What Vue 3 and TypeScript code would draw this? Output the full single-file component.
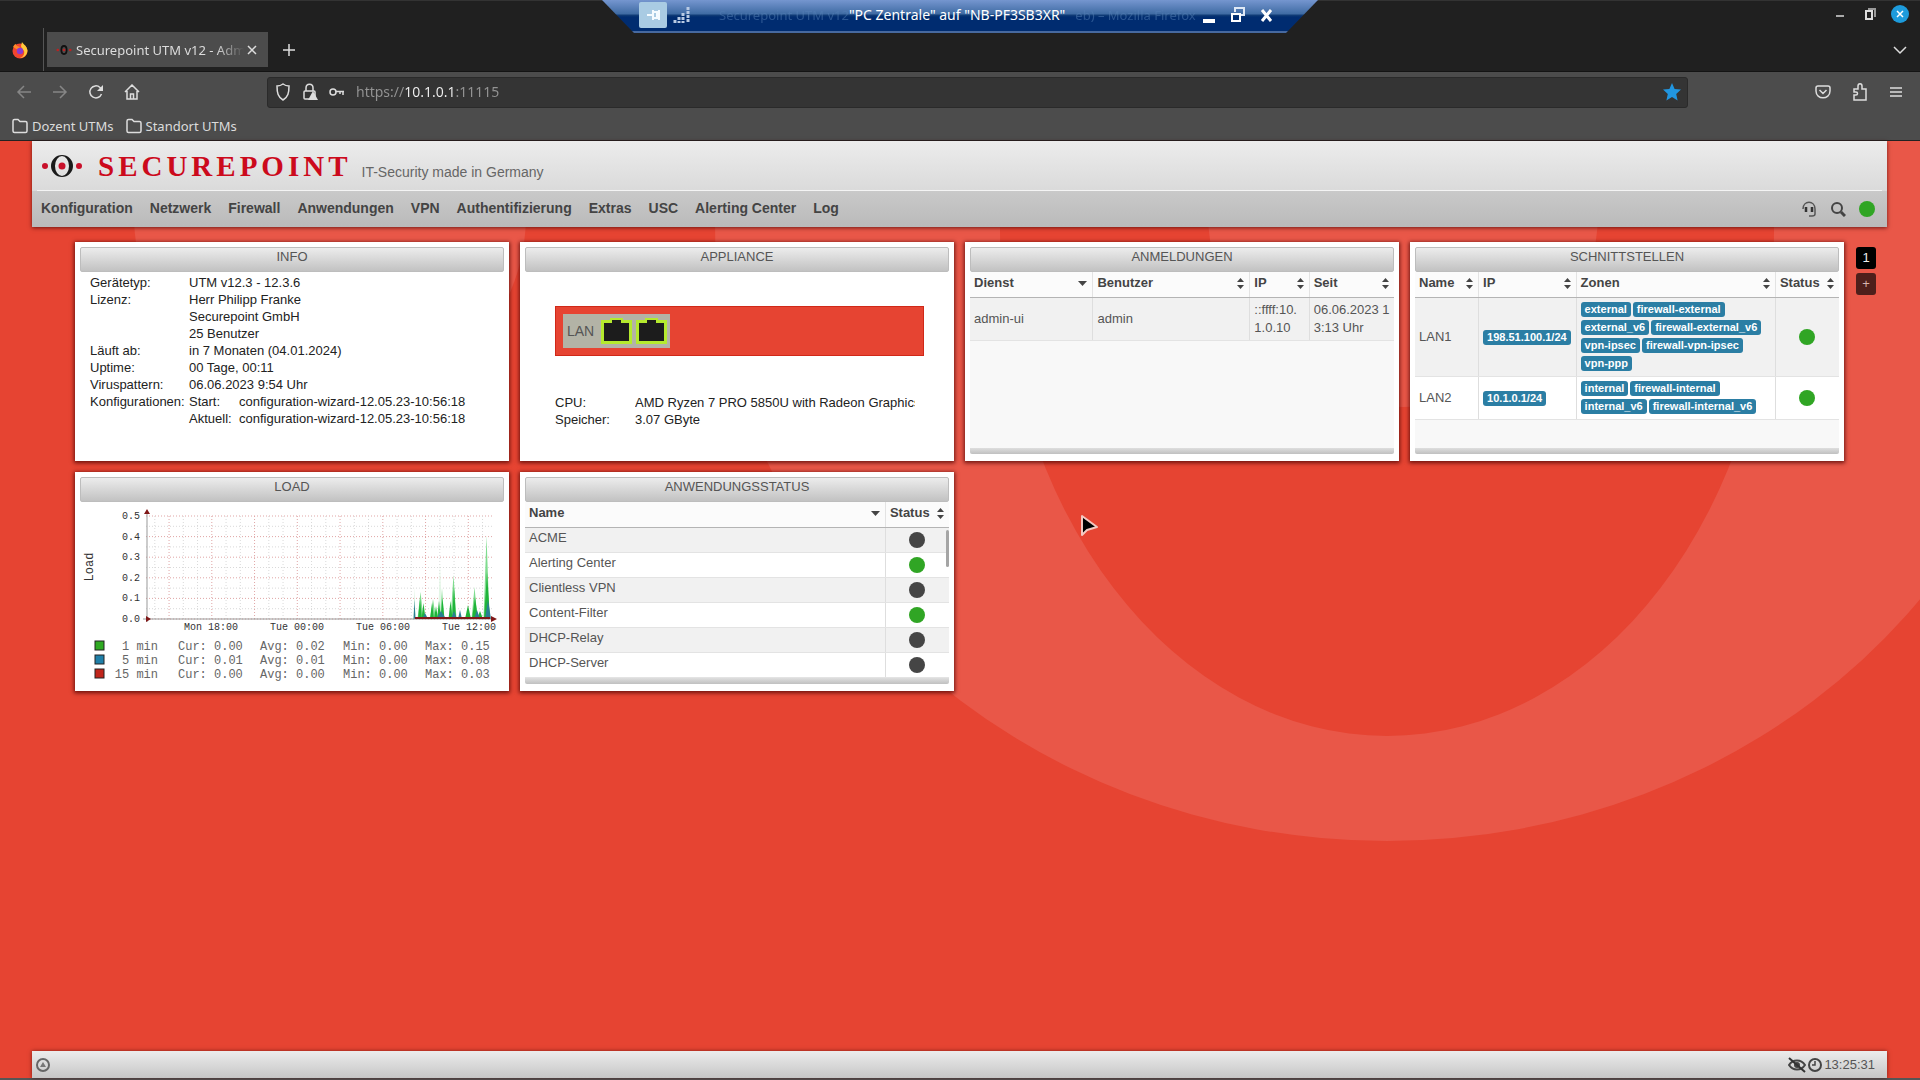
<script setup lang="ts">
import { ref } from 'vue'

interface Column { label: string; width: string; sorted?: boolean }
interface Port { name: string; ip: string; zones: string[][] }
interface Service { name: string; active: boolean }
interface Spike { x: number; top: number; half: number; color: string }

const address = ref('https://10.1.0.1:11115')

const bookmarks: string[] = ['Dozent UTMs', 'Standort UTMs']
const menu: string[] = [
  'Konfiguration', 'Netzwerk', 'Firewall', 'Anwendungen', 'VPN',
  'Authentifizierung', 'Extras', 'USC', 'Alerting Center', 'Log',
]

const info: { label: string; lines: string[] }[] = [
  { label: 'Gerätetyp:', lines: ['UTM v12.3 - 12.3.6'] },
  { label: 'Lizenz:', lines: ['Herr Philipp Franke', 'Securepoint GmbH', '25 Benutzer'] },
  { label: 'Läuft ab:', lines: ['in 7 Monaten (04.01.2024)'] },
  { label: 'Uptime:', lines: ['00 Tage, 00:11'] },
  { label: 'Viruspattern:', lines: ['06.06.2023 9:54 Uhr'] },
]
const configs: { label: string; file: string }[] = [
  { label: 'Start:', file: 'configuration-wizard-12.05.23-10:56:18' },
  { label: 'Aktuell:', file: 'configuration-wizard-12.05.23-10:56:18' },
]

const loginColumns: Column[] = [
  { label: 'Dienst', width: '29%', sorted: true },
  { label: 'Benutzer', width: '37%' },
  { label: 'IP', width: '14%' },
  { label: 'Seit', width: '20%' },
]
const portColumns: Column[] = [
  { label: 'Name', width: '15%' },
  { label: 'IP', width: '23%' },
  { label: 'Zonen', width: '47%' },
  { label: 'Status', width: '15%' },
]
const serviceColumns: Column[] = [
  { label: 'Name', width: '85%', sorted: true },
  { label: 'Status', width: '15%' },
]

const ports: Port[] = [
  {
    name: 'LAN1',
    ip: '198.51.100.1/24',
    zones: [
      ['external', 'firewall-external'],
      ['external_v6', 'firewall-external_v6'],
      ['vpn-ipsec', 'firewall-vpn-ipsec'],
      ['vpn-ppp'],
    ],
  },
  {
    name: 'LAN2',
    ip: '10.1.0.1/24',
    zones: [
      ['internal', 'firewall-internal'],
      ['internal_v6', 'firewall-internal_v6'],
    ],
  },
]

const services: Service[] = [
  { name: 'ACME', active: false },
  { name: 'Alerting Center', active: true },
  { name: 'Clientless VPN', active: false },
  { name: 'Content-Filter', active: true },
  { name: 'DHCP-Relay', active: false },
  { name: 'DHCP-Server', active: false },
]

const base = 117
const yTicks = [0, 1, 2, 3, 4, 5].map((n) => ({ label: `0.${n}`, y: base - n * 20.6 }))
const yMinor = [0, 1, 2, 3, 4].map((n) => base - 10.3 - n * 20.6)
const xGrid = Array.from({ length: 24 }, (_, n) => ({ x: 74.8 + n * 14.25, major: n % 3 === 1 }))
const xLabels = ['Mon 18:00', 'Tue 00:00', 'Tue 06:00', 'Tue 12:00'].map((text, n) => ({ text, x: 131 + n * 86 }))

const light = '#7fdc8f'
const green = '#1fb43a'
const blue = '#2a7f93'
const spikes: Spike[] = [
  { x: 334.5, top: 86, half: 1, color: '#d5f2d9' },
  { x: 360, top: 62, half: 2, color: '#e3f6e6' },
  { x: 340.5, top: 90, half: 3, color: light },
  { x: 353, top: 97, half: 3, color: light },
  { x: 362, top: 86, half: 2, color: light },
  { x: 373.5, top: 73, half: 3, color: light },
  { x: 394.5, top: 85, half: 3, color: light },
  { x: 406.5, top: 34, half: 3, color: light },
  { x: 340, top: 97, half: 2, color: green },
  { x: 343.5, top: 101, half: 2, color: green },
  { x: 352, top: 101, half: 2, color: green },
  { x: 356, top: 104, half: 2, color: green },
  { x: 359, top: 99, half: 2, color: green },
  { x: 362.5, top: 96, half: 2, color: green },
  { x: 370.5, top: 99, half: 2, color: green },
  { x: 374, top: 85, half: 2, color: green },
  { x: 388, top: 103, half: 3, color: green },
  { x: 395, top: 95, half: 3, color: green },
  { x: 400, top: 109, half: 3, color: green },
  { x: 407, top: 70, half: 3, color: green },
  { x: 334.5, top: 98, half: 1, color: blue },
  { x: 345, top: 111, half: 3, color: blue },
  { x: 361, top: 109, half: 5, color: blue },
  { x: 374, top: 109, half: 3, color: blue },
  { x: 380, top: 108, half: 2, color: blue },
  { x: 397, top: 108, half: 3, color: blue },
  { x: 408, top: 98, half: 3, color: blue },
]

const legend = [
  { name: '1 min', color: '#2faa22', cur: '0.00', avg: '0.02', min: '0.00', max: '0.15' },
  { name: '5 min', color: '#1f7fa8', cur: '0.01', avg: '0.01', min: '0.00', max: '0.08' },
  { name: '15 min', color: '#c0251b', cur: '0.00', avg: '0.00', min: '0.00', max: '0.03' },
].map((row, n) => ({ ...row, y: 139 + n * 14 }))
</script>

<template>
  <div class="screen">
    <header class="browser">
      <div class="tabs">
        <svg class="fox" viewBox="0 0 16 18">
          <circle cx="8" cy="10" r="7.5" fill="#f2452f" />
          <path d="M10 1c1 2 5 4 5.500 8.500C15 15 11 17 8 17c3-1 5-4 4-7-1-2-3-3-3-5z" fill="#ffc93a" />
          <path d="M1 6c1-2 2-3 3-3 0 2 2 2 4 3l-2 3z" fill="#ff8a2a" />
          <circle cx="8" cy="10" r="3.200" fill="#8a3bd0" />
        </svg>
        <div class="tab">
          <svg class="favicon" viewBox="0 0 18 12">
            <ellipse cx="9" cy="6" rx="3" ry="4.500" fill="none" stroke="#111" stroke-width="2" />
            <circle cx="9" cy="6" r="1.500" fill="#b22" /><circle cx="2" cy="6" r="1.500" fill="#b22" /><circle cx="16" cy="6" r="1.500" fill="#b22" />
          </svg>
          <span class="tab-title">Securepoint UTM v12 - Adm</span>
          <button class="plain" aria-label="Tab schließen">
            <svg width="12" height="12" viewBox="0 0 12 12"><path d="M2 2l8 8M10 2l-8 8" class="stroke" /></svg>
          </button>
        </div>
        <button class="plain new-tab" aria-label="Neuer Tab">
          <svg width="14" height="14" viewBox="0 0 14 14"><path d="M7 1v12M1 7h12" class="stroke" /></svg>
        </button>
        <div class="window-side">
          <div class="window-buttons">
            <button class="plain" aria-label="Minimieren"><svg width="18" height="18" viewBox="0 0 18 18"><path d="M5 11h8" stroke="#aaa" stroke-width="2" /></svg></button>
            <button class="plain" aria-label="Wiederherstellen"><svg width="18" height="18" viewBox="0 0 18 18"><path d="M7 4h7v8" fill="none" stroke="#999" stroke-width="2" /><rect x="5" y="6" width="6" height="8" fill="none" stroke="#ddd" stroke-width="2" /></svg></button>
            <button class="plain" aria-label="Fenster schließen"><svg width="18" height="18" viewBox="0 0 18 18"><circle cx="9" cy="9" r="9" fill="#1d9bdc" /><path d="M6 6l6 6M12 6l-6 6" stroke="#fff" stroke-width="1.500" /></svg></button>
          </div>
          <button class="plain" aria-label="Tabs auflisten"><svg width="18" height="14" viewBox="0 0 18 14"><path d="M3 4l6 6 6-6" class="stroke" /></svg></button>
        </div>
      </div>

      <div class="toolbar">
        <div class="nav-buttons">
          <button class="plain dim" aria-label="Zurück"><svg width="16" height="16" viewBox="0 0 16 16"><path d="M15 8H2M8 2L2 8l6 6" class="stroke" /></svg></button>
          <button class="plain dim" aria-label="Vor"><svg width="16" height="16" viewBox="0 0 16 16"><path d="M1 8h13M8 2l6 6-6 6" class="stroke" /></svg></button>
          <button class="plain" aria-label="Neu laden"><svg width="16" height="16" viewBox="0 0 16 16"><path d="M13.500 10A6 6 0 1 1 12 3.500L14 6" class="stroke" /><path d="M15 1v6H9z" fill="#ddd" /></svg></button>
          <button class="plain" aria-label="Startseite"><svg width="16" height="16" viewBox="0 0 16 16"><path d="M1 8l7-7 7 7M3 7v8h10V7M6.500 15v-5h3v5" class="stroke" /></svg></button>
        </div>
        <label class="url">
          <svg width="16" height="18" viewBox="0 0 16 18"><path d="M8 1c2 1.500 4 2 6 2 0 7-1 11-6 14C3 14 2 10 2 3c2 0 4-.5 6-2z" class="stroke" /></svg>
          <svg width="16" height="18" viewBox="0 0 16 18"><rect x="2" y="8" width="11" height="8" rx="1" class="stroke" /><path d="M4 8V5c0-5 7-5 7 0v3" class="stroke" /><path d="M11 8l5 9H6z" fill="#ddd" /></svg>
          <svg width="16" height="12" viewBox="0 0 16 12"><circle cx="4" cy="6" r="3" class="stroke" /><path d="M7 5.500h8M14 6v3M11 6v2" class="stroke" /></svg>
          <input v-model="address" type="text" aria-label="Adresse" />
          <svg width="18" height="18" viewBox="0 0 18 18"><path d="M9 0l2.600 6 6.400.6-4.800 4.300 1.400 6.600L9 14l-5.600 3.500 1.400-6.600L0 6.600 6.400 6z" fill="#2196e0" /></svg>
        </label>
        <div class="tool-buttons">
          <button class="plain" aria-label="Pocket"><svg width="16" height="16" viewBox="0 0 16 16"><path d="M3 2h10c1.500 0 2 .5 2 2v3c0 9-14 9-14 0V4c0-1.500.5-2 2-2zM4.500 6L8 9.500 11.500 6" class="stroke" /></svg></button>
          <button class="plain" aria-label="Erweiterungen"><svg width="16" height="18" viewBox="0 0 16 18"><path d="M2 17h12V6h-4V3c0-3-4-3-4 0v3H2v3h2c2 0 2 3 0 3H2z" class="stroke" /></svg></button>
          <button class="plain" aria-label="Menü"><svg width="14" height="14" viewBox="0 0 14 14"><path d="M1 3h12M1 7h12M1 11h12" class="stroke" /></svg></button>
        </div>
      </div>

      <nav class="bookmarks">
        <a v-for="b in bookmarks" :key="b" href="#">
          <svg width="16" height="16" viewBox="0 0 16 16"><path d="M1 13V3c0-1 .5-1.500 1.500-1.500h3.500l2 2h5.500c1 0 1.500.5 1.500 1.500v8c0 1-.5 1.500-1.500 1.500h-11C1.500 14.500 1 14 1 13z" class="stroke" /></svg>
          {{ b }}
        </a>
      </nav>

      <div class="remote">
        <button class="plain pin" aria-label="Anheften"><svg width="28" height="26" viewBox="0 0 28 26"><path d="M8 13h6M14 8v10M15 10h3v6h-3M20 8v10" stroke="#f4fbff" stroke-width="2" fill="none" /></svg></button>
        <svg class="signal" width="18" height="18" viewBox="0 0 18 18"><path d="M2 14v3M6 11v6M10 7v10M15 1v16" stroke="#b9cbe4" stroke-width="3" stroke-dasharray="3 1" /></svg>
        <span class="ghost">Securepoint UTM v12</span>
        <span class="remote-title">"PC Zentrale" auf "NB-PF3SB3XR"</span>
        <span class="ghost">eb) – Mozilla Firefox</span>
        <span class="remote-buttons">
          <button class="plain" aria-label="Verbindungsleiste minimieren"><svg width="16" height="18" viewBox="0 0 16 18"><path d="M2 15h12" stroke="#fff" stroke-width="4" /></svg></button>
          <button class="plain" aria-label="Vollbild verlassen"><svg width="16" height="18" viewBox="0 0 16 18"><path d="M5 6V2h9v7h-4" fill="none" stroke="#dfe8f5" stroke-width="2" /><rect x="2" y="8" width="8" height="7" fill="none" stroke="#fff" stroke-width="2" /></svg></button>
          <button class="plain" aria-label="Verbindung trennen"><svg width="16" height="18" viewBox="0 0 16 18"><path d="M3 4l9 11M12 4L3 15" stroke="#fff" stroke-width="3" /></svg></button>
        </span>
      </div>
    </header>

    <div class="page">
      <svg class="backdrop" viewBox="0 0 1920 939" preserveAspectRatio="xMidYMin slice">
        <path fill="#e95748" fill-rule="evenodd" d="M715 82a672 618 0 1 0 1344 0a672 618 0 1 0 -1344 0zM1000 89a387 506 0 1 0 774 0a387 506 0 1 0 -774 0z" />
        <circle cx="1403" cy="71" r="195" fill="#e95748" />
        <circle cx="330" cy="74" r="196" fill="#e95748" />
      </svg>

      <div class="top">
        <div class="brand">
          <svg width="40" height="24" viewBox="0 0 40 24">
            <path fill="#1a1a1a" fill-rule="evenodd" d="M9 12a11 11 0 1 0 22 0a11 11 0 1 0 -22 0zM13 12a7 10 0 1 0 14 0a7 10 0 1 0 -14 0z" />
            <circle cx="20" cy="12" r="3.500" fill="#c8102a" /><circle cx="3" cy="12" r="3" fill="#c8102a" /><circle cx="37" cy="12" r="3" fill="#c8102a" />
          </svg>
          <span class="wordmark">SECUREPOINT</span>
          <span class="claim">IT-Security made in Germany</span>
        </div>
        <div class="menu-row">
          <nav class="menu"><a v-for="m in menu" :key="m" href="#">{{ m }}</a></nav>
          <div class="menu-tools">
            <button class="plain" aria-label="Support"><svg width="16" height="16" viewBox="0 0 16 16"><path d="M2 8c0-9 12-9 12 0v5c0 1-1 2-3 2H8" fill="none" stroke="#555" stroke-width="1.500" /><path d="M5 6v5M11 6v5" stroke="#333" stroke-width="2.500" /></svg></button>
            <button class="plain" aria-label="Suche"><svg width="16" height="16" viewBox="0 0 16 16"><circle cx="7" cy="7" r="5" fill="none" stroke="#444" stroke-width="2" /><path d="M11 11l4 4" stroke="#444" stroke-width="3" /></svg></button>
            <span class="dot on"></span>
          </div>
        </div>
      </div>

      <main class="desk">
        <div class="cards">
          <section class="card">
            <h2>INFO</h2>
            <dl class="info">
              <template v-for="row in info" :key="row.label">
                <dt>{{ row.label }}</dt>
                <dd><div v-for="line in row.lines" :key="line">{{ line }}</div></dd>
              </template>
              <dt>Konfigurationen:</dt>
              <dd><div v-for="c in configs" :key="c.label" class="config"><span>{{ c.label }}</span><span>{{ c.file }}</span></div></dd>
            </dl>
          </section>

          <section class="card">
            <h2>APPLIANCE</h2>
            <div class="appliance">
              <div class="chassis">
                <div class="lan">
                  <span>LAN</span>
                  <svg v-for="n in 2" :key="n" width="31" height="26" viewBox="0 0 31 26">
                    <path d="M0 2h9V0h13v2h9v24H0z" fill="#b5ea2e" />
                    <path d="M3 5h8V2h9v3h8v18H3z" fill="#1c1c1c" />
                  </svg>
                </div>
              </div>
              <dl class="hardware">
                <dt>CPU:</dt><dd>AMD Ryzen 7 PRO 5850U with Radeon Graphics</dd>
                <dt>Speicher:</dt><dd>3.07 GByte</dd>
              </dl>
            </div>
          </section>

          <section class="card">
            <h2>ANMELDUNGEN</h2>
            <div class="sheet">
              <table>
                <thead><tr>
                  <th v-for="c in loginColumns" :key="c.label" :style="{ width: c.width }">
                    <button class="sort">{{ c.label }}
                      <svg v-if="c.sorted" width="9" height="12" viewBox="0 0 9 12"><path d="M0 4h9l-4.500 5z" fill="#444" /></svg>
                      <svg v-else width="7" height="12" viewBox="0 0 7 12"><path d="M0 5h7L3.500 1zM0 8h7l-3.500 4z" fill="#444" /></svg>
                    </button>
                  </th>
                </tr></thead>
                <tbody><tr class="double">
                  <td>admin-ui</td><td>admin</td>
                  <td>::ffff:10.<br />1.0.10</td>
                  <td>06.06.2023 1<br />3:13 Uhr</td>
                </tr></tbody>
              </table>
            </div>
            <div class="grip"></div>
          </section>

          <section class="card">
            <h2>SCHNITTSTELLEN</h2>
            <div class="sheet">
              <table>
                <thead><tr>
                  <th v-for="c in portColumns" :key="c.label" :style="{ width: c.width }">
                    <button class="sort">{{ c.label }}
                      <svg width="7" height="12" viewBox="0 0 7 12"><path d="M0 5h7L3.500 1zM0 8h7l-3.500 4z" fill="#444" /></svg>
                    </button>
                  </th>
                </tr></thead>
                <tbody>
                  <tr v-for="p in ports" :key="p.name">
                    <td>{{ p.name }}</td>
                    <td><span class="badge">{{ p.ip }}</span></td>
                    <td><div v-for="(line, n) in p.zones" :key="n" class="zone-line"><span v-for="z in line" :key="z" class="badge">{{ z }}</span></div></td>
                    <td class="state"><span class="dot on"></span></td>
                  </tr>
                </tbody>
              </table>
            </div>
            <div class="grip"></div>
          </section>

          <section class="card">
            <h2>LOAD</h2>
            <svg class="chart" viewBox="0 0 424 185">
              <g stroke-width="1" stroke-dasharray="1 2">
                <path v-for="y in yMinor" :key="y" :d="`M66 ${y}H412`" stroke="#d9d9d9" />
                <path v-for="t in yTicks" :key="t.y" :d="`M66 ${t.y}H412`" stroke="#e0a5a5" />
                <path v-for="g in xGrid" :key="g.x" :d="`M${g.x} 14V117`" :stroke="g.major ? '#e0a5a5' : '#d9d9d9'" />
              </g>
              <path v-for="(s, n) in spikes" :key="n" :d="`M${s.x - s.half} ${base}L${s.x} ${s.top}L${s.x + s.half} ${base}z`" :fill="s.color" />
              <path d="M67 12V120M63 117H414" stroke="#999" fill="none" />
              <path d="M335 116H410" stroke="#801818" stroke-width="2" />
              <path d="M64 12l3-5 3 5zM411 114l6 3-6 3zM66 114l5 3-5 3z" fill="#801818" />
              <g class="small">
                <text v-for="t in yTicks" :key="t.label" x="60" :y="t.y + 3" text-anchor="end">{{ t.label }}</text>
                <text v-for="l in xLabels" :key="l.text" :x="l.x" y="128" text-anchor="middle">{{ l.text }}</text>
              </g>
              <text transform="translate(13 65) rotate(-90)" text-anchor="middle">Load</text>
              <g v-for="row in legend" :key="row.name" class="pale">
                <rect x="15" :y="row.y" width="9" height="9" :fill="row.color" stroke="#222" />
                <text x="78" :y="row.y + 9" text-anchor="end">{{ row.name }}</text>
                <text x="98" :y="row.y + 9">Cur: {{ row.cur }}</text>
                <text x="180" :y="row.y + 9">Avg: {{ row.avg }}</text>
                <text x="263" :y="row.y + 9">Min: {{ row.min }}</text>
                <text x="345" :y="row.y + 9">Max: {{ row.max }}</text>
              </g>
            </svg>
          </section>

          <section class="card">
            <h2>ANWENDUNGSSTATUS</h2>
            <div class="sheet">
              <table class="services">
                <thead><tr>
                  <th v-for="c in serviceColumns" :key="c.label" :style="{ width: c.width }">
                    <button class="sort">{{ c.label }}
                      <svg v-if="c.sorted" width="9" height="12" viewBox="0 0 9 12"><path d="M0 4h9l-4.500 5z" fill="#444" /></svg>
                      <svg v-else width="7" height="12" viewBox="0 0 7 12"><path d="M0 5h7L3.500 1zM0 8h7l-3.500 4z" fill="#444" /></svg>
                    </button>
                  </th>
                </tr></thead>
                <tbody>
                  <tr v-for="s in services" :key="s.name">
                    <td>{{ s.name }}</td>
                    <td class="state"><span class="dot" :class="{ on: s.active }"></span></td>
                  </tr>
                </tbody>
              </table>
              <span class="thumb"></span>
            </div>
            <div class="grip"></div>
          </section>
        </div>

        <div class="desks">
          <button class="desk-tab">1</button>
          <button class="desk-tab add">+</button>
        </div>
      </main>

      <footer class="bottom">
        <svg width="16" height="16" viewBox="0 0 16 16"><circle cx="8" cy="8" r="6" fill="none" stroke="#666" stroke-width="2" /><path d="M5 10l3-5 3 5z" fill="#777" /></svg>
        <div class="clock">
          <svg width="18" height="16" viewBox="0 0 18 16"><path d="M1 8c4-6 12-6 16 0-4 6-12 6-16 0z" fill="none" stroke="#444" stroke-width="2" /><circle cx="9" cy="8" r="3" fill="#444" /><path d="M1 1l16 14" stroke="#333" stroke-width="2" /></svg>
          <svg width="16" height="16" viewBox="0 0 16 16"><circle cx="8" cy="8" r="6" fill="none" stroke="#444" stroke-width="2" /><path d="M8 4v4H5" fill="none" stroke="#444" stroke-width="1.500" /></svg>
          <span>13:25:31</span>
        </div>
      </footer>

      <svg class="pointer" width="20" height="24" viewBox="0 0 20 24"><path d="M2 2v19l5-5 10-3z" fill="#000" stroke="#f3c8c0" stroke-width="2" stroke-linejoin="round" /></svg>
    </div>
  </div>
</template>

<style>
body {
  margin: 0;
}
</style>

<style scoped>
* {
  box-sizing: border-box;
}
.screen {
  display: flex;
  flex-direction: column;
  min-height: 100vh;
  font: 13px/17px "Liberation Sans", Arial, sans-serif;
  color: #222;
}
svg {
  display: block;
  flex: none;
}
a {
  color: inherit;
  text-decoration: none;
}
.plain {
  display: block;
  padding: 0;
  border: 0;
  background: none;
}
.stroke {
  fill: none;
  stroke: #ddd;
  stroke-width: 1.5;
}
.dim {
  opacity: 0.4;
}

/* browser */
.browser {
  position: relative;
  background: #4c4c4c;
  border-bottom: 1px solid #222;
  font: 13px/18px "Noto Sans", "Open Sans", sans-serif;
  color: #dcdcdc;
}
.tabs {
  display: flex;
  height: 72px;
  background: #202020;
  border-top: 1px solid #333;
  border-bottom: 1px solid #141414;
}
.fox {
  width: 16px;
  height: 18px;
  margin: 40px 15px 0 12px;
}
.tab {
  display: flex;
  align-items: center;
  width: 225px;
  height: 43px;
  margin-top: 27px;
  padding: 4px 10px 4px 12px;
  border-left: 1px solid #555;
  background: linear-gradient(#4c4c4c, #4c4c4c) 3px 4px / 221px 35px no-repeat;
}
.favicon {
  width: 16px;
  height: 12px;
}
.tab-title {
  flex: 1;
  margin-left: 4px;
  white-space: nowrap;
  mask-image: linear-gradient(to right, #000 140px, transparent 168px);
}
.new-tab {
  align-self: flex-start;
  margin: 42px 0 0 14px;
}
.window-side {
  display: flex;
  flex-direction: column;
  align-items: flex-end;
  gap: 20px;
  margin-left: auto;
  padding: 4px 11px 0 0;
}
.window-buttons {
  display: flex;
  gap: 12px;
}
.toolbar {
  display: flex;
  align-items: center;
  height: 40px;
}
.nav-buttons {
  display: flex;
  gap: 20px;
  width: 267px;
  padding-left: 16px;
}
.url {
  display: flex;
  flex: 1;
  align-items: center;
  gap: 11px;
  height: 31px;
  padding: 0 6px 0 7px;
  border: 1px solid #2a2a2a;
  border-radius: 3px;
  background: #343434;
}
.url input {
  flex: 1;
  min-width: 0;
  padding: 0;
  border: 0;
  outline: 0;
  font: 14px/20px "Noto Sans", "Open Sans", sans-serif;
  color: transparent;
  background: linear-gradient(to right, #949494 49px, #f2f2f2 49px 100px, #949494 100px);
  background-clip: text;
}
.tool-buttons {
  display: flex;
  align-items: center;
  justify-content: flex-end;
  gap: 21px;
  width: 232px;
  padding-right: 17px;
}
.bookmarks {
  display: flex;
  gap: 12px;
  height: 28px;
  padding: 4px 12px;
}
.bookmarks a {
  display: flex;
  align-items: center;
  gap: 4px;
  height: 20px;
}
.remote {
  position: absolute;
  top: 0;
  left: 50%;
  display: flex;
  align-items: center;
  width: 716px;
  height: 33px;
  padding: 0 43px 3px 37px;
  transform: translateX(-50%);
  clip-path: polygon(0 0, 100% 0, 684px 100%, 32px 100%);
  background: linear-gradient(#7596cf, #3f6ba3 14px, #123d77 15px, #002c70 17px, #002c70 31px, #47699f 31px);
  color: #fff;
  white-space: nowrap;
}
.pin {
  border-radius: 2px;
  background: #a9cbe3;
}
.signal {
  margin: 0 28px 0 6px;
}
.remote-title {
  margin-right: 10px;
  font-size: 14px;
}
.ghost {
  color: #5580b6;
  opacity: 0.5;
}
.remote-buttons {
  display: flex;
  gap: 13px;
  margin-left: auto;
}

/* page */
.page {
  position: relative;
  display: flex;
  flex: 1;
  flex-direction: column;
  background: #e64432;
  border-bottom: 2px solid #555;
}
.backdrop {
  position: absolute;
  inset: 0;
  width: 100%;
  height: 100%;
}
.top {
  position: relative;
  margin: 0 33px 0 32px;
  padding: 0 5px;
  background: linear-gradient(#ececec, #dadada 50px, #c9c9c9 50px, #bababa);
  box-shadow: 0 1px 4px rgba(60, 0, 0, 0.7);
}
.brand {
  display: flex;
  align-items: center;
  height: 50px;
  padding-left: 5px;
  border-bottom: 1px solid #f4f4f4;
}
.wordmark {
  margin-left: 16px;
  font: bold 29px/34px "Liberation Serif", serif;
  letter-spacing: 4px;
  color: #cc0a1c;
}
.claim {
  margin: 14px 0 0 10px;
  font-size: 14px;
  color: #666;
}
.menu-row {
  display: flex;
  justify-content: space-between;
  height: 36px;
  padding: 0 7px 0 4px;
}
.menu {
  display: flex;
  gap: 17px;
  font-size: 14px;
  font-weight: bold;
  line-height: 34px;
  color: #444;
}
.menu-tools {
  display: flex;
  align-items: center;
  gap: 13px;
}
.dot {
  display: inline-block;
  width: 16px;
  height: 16px;
  border-radius: 50%;
  background: #454545;
  vertical-align: middle;
}
.dot.on {
  background: #30a524;
}
.desk {
  position: relative;
  display: flex;
  flex: 1;
  align-items: flex-start;
  gap: 12px;
  padding: 15px 44px 0 75px;
}
.cards {
  display: grid;
  flex: 1;
  grid-template-columns: repeat(4, minmax(0, 1fr));
  gap: 11px;
}
.card {
  display: flex;
  flex-direction: column;
  height: 219px;
  padding: 5px;
  background: #fff;
  box-shadow: 0 1px 4px 1px rgba(70, 0, 0, 0.75);
}
h2 {
  flex: none;
  height: 25px;
  margin: 0;
  border: 1px solid #bdbdbd;
  border-radius: 2px;
  background: linear-gradient(#ececec, #c2c2c2);
  font-size: 13px;
  font-weight: normal;
  line-height: 17px;
  text-align: center;
  color: #555;
}
dl,
dd {
  margin: 0;
}
.info {
  display: grid;
  grid-template-columns: 99px 1fr;
  padding: 2px 0 0 10px;
}
.config {
  display: grid;
  grid-template-columns: 50px 1fr;
}
.appliance {
  padding: 34px 25px 0 30px;
}
.chassis {
  height: 50px;
  padding: 7px;
  border: 1px solid #d02818;
  background: #e64432;
}
.lan {
  display: flex;
  align-items: center;
  gap: 4px;
  width: 107px;
  height: 34px;
  padding: 0 3px 0 4px;
  background: #b3b3a6;
  font-size: 14px;
  color: #555;
}
.lan span {
  width: 30px;
}
.hardware {
  display: grid;
  grid-template-columns: 80px 1fr;
  padding: 38px 9px 0 0;
}
.hardware dd {
  overflow: hidden;
  white-space: nowrap;
}
.sheet {
  position: relative;
  flex: 1;
  background: #f8f8f8;
}
table {
  width: 100%;
  border-collapse: collapse;
  table-layout: fixed;
}
th {
  height: 25px;
  padding: 0 5px 2px 4px;
  border-bottom: 1px solid #b4b4b4;
  border-right: 1px solid #e3e3e3;
  background: #fbfbfb;
}
th:last-child,
td:last-child {
  border-right: 0;
}
.sort {
  display: flex;
  align-items: center;
  justify-content: space-between;
  width: 100%;
  padding: 0;
  border: 0;
  background: none;
  font: bold 13px/20px "Liberation Sans", Arial, sans-serif;
  color: #444;
}
td {
  padding: 3px 4px;
  border-right: 1px solid #dedede;
  border-bottom: 1px solid #e3e3e3;
  background: #fff;
  line-height: 18px;
  color: #555;
}
tbody tr:nth-child(odd) td {
  background: #f1f1f1;
}
.double td {
  height: 42px;
}
.services td {
  height: 25px;
}
.services td:first-child {
  padding: 0 4px 3px;
}
td.state {
  padding: 0;
  text-align: center;
  line-height: 16px;
}
.zone-line {
  display: flex;
  gap: 2px;
  height: 18px;
  align-items: center;
}
.badge {
  display: inline-block;
  padding: 0 4px;
  border-radius: 3px;
  background: #2b7ea4;
  font-size: 11px;
  font-weight: bold;
  line-height: 15px;
  white-space: nowrap;
  color: #fff;
}
.grip {
  flex: none;
  height: 6px;
  margin-bottom: 2px;
  border-radius: 0 0 2px 2px;
  background: linear-gradient(#dedede, #c0c0c0);
}
.thumb {
  position: absolute;
  top: 28px;
  right: 0;
  width: 3px;
  height: 37px;
  border-radius: 2px;
  background: #a5a5a5;
}
.chart {
  width: 100%;
  font: 12px "Liberation Mono", monospace;
  fill: #333;
}
.chart .small {
  font-size: 10px;
}
.chart .pale text {
  fill: #666;
}
.desks {
  display: flex;
  flex-direction: column;
  gap: 4px;
  width: 20px;
  padding-top: 5px;
}
.desk-tab {
  height: 22px;
  padding: 0;
  border: 0;
  border-radius: 3px;
  background: #000;
  font: 13px/22px "Liberation Sans", Arial, sans-serif;
  color: #eee;
}
.desk-tab.add {
  background: #4f1f1b;
  color: #d9b3ae;
}
.bottom {
  position: relative;
  display: flex;
  align-items: center;
  justify-content: space-between;
  height: 27px;
  margin: 0 33px 0 32px;
  padding: 0 12px 0 3px;
  background: linear-gradient(#ececec, #c6c6c6);
  box-shadow: 0 0 4px rgba(60, 0, 0, 0.6);
  color: #555;
}
.clock {
  display: flex;
  align-items: center;
  gap: 1px;
}
.pointer {
  position: absolute;
  top: 373px;
  left: 1080px;
}
</style>
